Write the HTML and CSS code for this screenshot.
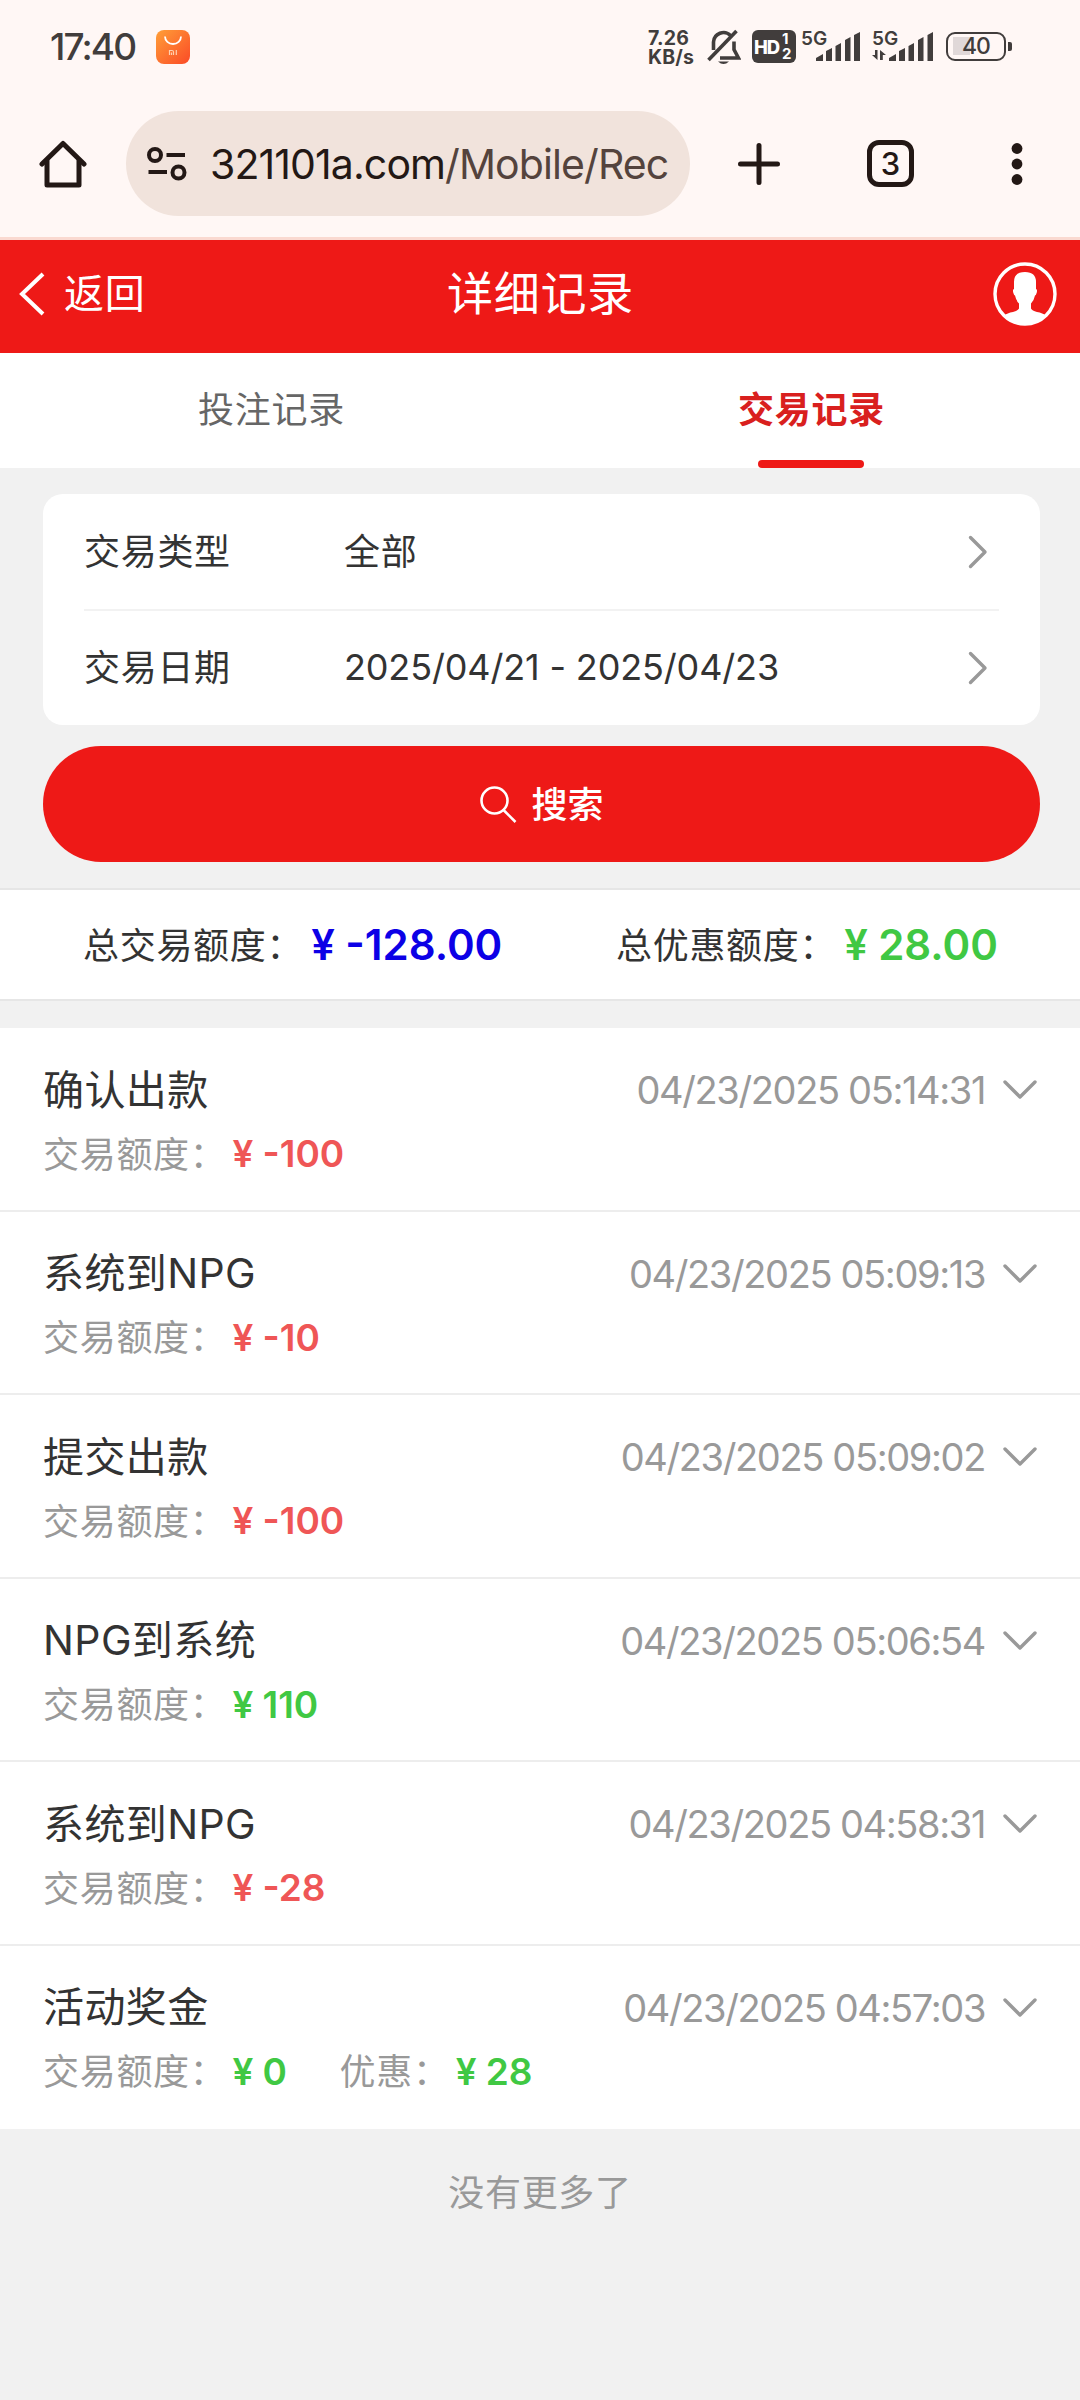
FILE: index.html
```html
<!DOCTYPE html>
<html lang="zh-CN">
<head>
<meta charset="utf-8">
<title>详细记录</title>
<link rel="stylesheet" href="styles.css">
</head>
<body>
<div class="status">
  <span class="clock">17:40</span>
  <svg class="store" width="34" height="34" viewBox="0 0 34 34"><defs><linearGradient id="g" x1="0" y1="0" x2="1" y2="1"><stop offset="0" stop-color="#ff9f38"/><stop offset="1" stop-color="#fb4a26"/></linearGradient></defs><rect width="34" height="34" rx="8" fill="url(#g)"/><path d="M9 6.500a8 7.500 0 0 0 16 0" fill="none" stroke="#fff" stroke-width="1.800"/><path d="M13.500 25v-4.500h2.500q1.500 0 1.500 1.500v3M15.500 22.500v2.500M20.300 20v5" fill="none" stroke="#ffd0b0" stroke-width="1.200"/></svg>
  <span class="speed"><span>7.26</span><span>KB/s</span></span>
  <svg class="bell" width="34" height="38" viewBox="0 0 34 38" fill="none" stroke="#413d3c" stroke-width="3.600"><path d="M6.500 22V14a10 10 0 0 1 17-6.500M27 13.500v8l4.500 8.500H13"/><path d="M1.500 32L29.500 3"/><path d="M11 33.500h11q-5.500 5-11 0z" fill="#413d3c" stroke="none"/></svg>
  <span class="hd"><b>HD</b><span class="sims"><i>1</i><i>2</i></span></span>
  <span class="signal one"><em>5G</em><svg width="60" height="34" viewBox="0 0 60 34" fill="#413d3c"><path d="M15 31v-3l7-4v7zM25 31v-10l6-3v13zM34.500 31v-15l5.500-3v18zM44 31v-21l5.500-3v24zM53 31v-26l6-3v29z"/></svg></span>
  <span class="signal two"><em>5G</em><svg width="62" height="34" viewBox="0 0 62 34" fill="#413d3c"><path d="M17 31v-3l7-4v7zM27 31v-10l6-3v13zM36.500 31v-15l5.500-3v18zM46 31v-21l5.500-3v24zM55.500 31v-26l5.500-3v29zM3 20h2.500v10l-5.500-5h3zM8 20l6 5h-3.200v5H8z"/></svg></span>
  <span class="battery"><b>40</b></span>
</div>
<div class="toolbar">
  <svg class="home" width="48" height="48" viewBox="0 0 48 48" fill="none" stroke="#231815" stroke-width="5" stroke-linecap="round" stroke-linejoin="round"><path d="M3 24L24 3.500 45 24"/><path d="M8 21v24h32V21"/></svg>
  <div class="pill">
    <svg width="40" height="34" viewBox="0 0 40 34" fill="none" stroke="#231815" stroke-width="4"><circle cx="8" cy="8" r="6"/><path d="M19.500 8H38M1.500 25H20"/><circle cx="31.500" cy="25.500" r="6"/></svg>
    <span class="url">321101a.com<span class="path">/Mobile/Rec</span></span>
  </div>
  <svg class="plus" width="42" height="42" viewBox="0 0 42 42" stroke="#231815" stroke-width="5" stroke-linecap="round"><path d="M2.500 21h37M21 2.500v37"/></svg>
  <span class="tabs">3</span>
  <svg class="dots" width="12" height="44" viewBox="0 0 12 44" fill="#231815"><circle cx="6" cy="6.500" r="5.400"/><circle cx="6" cy="22" r="5.400"/><circle cx="6" cy="37.500" r="5.400"/></svg>
</div>
<header class="head">
  <span class="back"><svg width="26" height="44" viewBox="0 0 26 44" fill="none" stroke="#fff" stroke-width="4"><path d="M24 2L3 22l21 20"/></svg><span>返回</span></span>
  <h1>详细记录</h1>
  <svg class="avatar" width="64" height="64" viewBox="0 0 64 64"><circle cx="32" cy="32" r="30" fill="none" stroke="#fff" stroke-width="3.400"/><path d="M21 20q0-10 11-10t11 10v7q1.500 0 .8 3.500-.8 3-1.800 3-1 5-4 8v5q1 2 6 3.500 6 1 8.500 3.500Q43 63 32 63T11.500 53.500Q14 51 20 50q5-1.500 6-3.500v-5q-3-3-4-8-1 0-1.800-3Q19.500 27 21 27z" fill="#fff"/></svg>
</header>
<nav class="nav"><span>投注记录</span><span class="on">交易记录</span></nav>
<main>
  <section class="card">
    <div class="row"><span class="k">交易类型</span><span class="v">全部</span><svg class="go" width="20" height="34" viewBox="0 0 20 34"><path d="M2.500 2.500L17 17 2.500 31.500"/></svg></div>
    <div class="row"><span class="k">交易日期</span><span class="v date">2025/04/21 - 2025/04/23</span><svg class="go" width="20" height="34" viewBox="0 0 20 34"><path d="M2.500 2.500L17 17 2.500 31.500"/></svg></div>
  </section>
  <button class="search"><svg width="37" height="37" viewBox="0 0 37 37" fill="none" stroke="#fff" stroke-width="2.600"><circle cx="14.500" cy="14.500" r="13"/><path d="M23.500 24L35.500 36"/></svg><span>搜索</span></button>
  <section class="sum">
    <div><span>总交易额度：</span><b class="blue"><i>¥</i><span>-128.00</span></b></div>
    <div><span>总优惠额度：</span><b class="green"><i>¥</i><span>28.00</span></b></div>
  </section>
  <ul class="list">
    <li><div class="top"><h2>确认出款</h2><time>04/23/2025 05:14:31</time><svg class="down" width="34" height="20" viewBox="0 0 34 20"><path d="M2 2l15 15L32 2"/></svg></div><div class="sub"><span>交易额度：</span><b class="red"><i>¥</i><span>-100</span></b></div></li>
    <li><div class="top"><h2>系统到NPG</h2><time>04/23/2025 05:09:13</time><svg class="down" width="34" height="20" viewBox="0 0 34 20"><path d="M2 2l15 15L32 2"/></svg></div><div class="sub"><span>交易额度：</span><b class="red"><i>¥</i><span>-10</span></b></div></li>
    <li><div class="top"><h2>提交出款</h2><time>04/23/2025 05:09:02</time><svg class="down" width="34" height="20" viewBox="0 0 34 20"><path d="M2 2l15 15L32 2"/></svg></div><div class="sub"><span>交易额度：</span><b class="red"><i>¥</i><span>-100</span></b></div></li>
    <li><div class="top"><h2>NPG到系统</h2><time>04/23/2025 05:06:54</time><svg class="down" width="34" height="20" viewBox="0 0 34 20"><path d="M2 2l15 15L32 2"/></svg></div><div class="sub"><span>交易额度：</span><b class="green"><i>¥</i><span>110</span></b></div></li>
    <li><div class="top"><h2>系统到NPG</h2><time>04/23/2025 04:58:31</time><svg class="down" width="34" height="20" viewBox="0 0 34 20"><path d="M2 2l15 15L32 2"/></svg></div><div class="sub"><span>交易额度：</span><b class="red"><i>¥</i><span>-28</span></b></div></li>
    <li><div class="top"><h2>活动奖金</h2><time>04/23/2025 04:57:03</time><svg class="down" width="34" height="20" viewBox="0 0 34 20"><path d="M2 2l15 15L32 2"/></svg></div><div class="sub"><span>交易额度：</span><b class="green first"><i>¥</i><span>0</span></b><span>优惠：</span><b class="green"><i>¥</i><span>28</span></b></div></li>
  </ul>
  <p class="end">没有更多了</p>
</main>
</body>
</html>
```
FILE: styles.css
```css
* { box-sizing: border-box; }
body { margin: 0; width: 1080px; height: 2400px; overflow: hidden; background: #f1f1f1; color: #333; font-family: Inter, "Noto Sans CJK SC", sans-serif; font-size: 36px; }
h1, h2, p, ul { margin: 0; padding: 0; font-weight: 400; }
i, em { font-style: normal; }
svg { display: block; flex: none; }

.status { display: flex; align-items: flex-start; height: 95px; padding: 0 68px 0 50px; background: #fff7f5; color: #413d3c; }
.clock { width: 106px; margin-top: 24px; font-size: 37px; line-height: 46px; font-weight: 500; letter-spacing: -1.900px; white-space: nowrap; }
.store { margin-top: 30px; }
.speed { display: flex; flex-direction: column; width: 59px; margin: 29px 0 0 458px; font-size: 19.500px; line-height: 19px; font-weight: 700; letter-spacing: .2px; white-space: nowrap; }
.bell { margin-top: 28px; }
.hd { display: flex; align-items: center; width: 44px; height: 33px; margin: 30px 0 0 11px; padding-left: 2px; border-radius: 6px; background: #413d3c; color: #fff; font-size: 18.500px; letter-spacing: -1px; }
.hd b { width: 28px; font-weight: 800; }
.sims { display: flex; flex-direction: column; font-size: 15px; line-height: 14.500px; font-weight: 700; }
.signal { position: relative; margin-top: 30px; }
.signal em { position: absolute; left: 0; top: -2px; font-size: 19px; line-height: 22px; font-weight: 600; }
.one { margin-left: 5px; }
.two { margin-left: 11px; }
.battery { position: relative; width: 60px; height: 29px; margin: 32px 0 0 12px; border: 2.500px solid #413d3c; border-radius: 9px; background: linear-gradient(#e0d8d8, #e0d8d8) 5px 3px / 17px 18px no-repeat; }
.battery b { display: block; text-align: center; font-size: 23px; line-height: 24px; font-weight: 500; letter-spacing: -1px; }
.battery::after { content: ""; position: absolute; right: -8px; top: 8px; width: 4px; height: 9px; border-radius: 0 2px 2px 0; background: #413d3c; }

.toolbar { display: flex; align-items: center; height: 145px; padding: 0 57px 5px 39px; border-bottom: 3px solid #fad9d0; background: #fff7f5; color: #231815; }
.pill { display: flex; align-items: center; width: 565px; height: 105px; margin-left: 39px; padding-left: 21px; border-radius: 53px; background: #f1e3dc; }
.url { margin-left: 23px; font-size: 41px; letter-spacing: -.9px; white-space: nowrap; }
.path { color: #54433d; }
.plus { margin-left: 48px; }
.tabs { width: 47px; height: 47px; margin-left: 87px; border: 5px solid #231815; border-radius: 12px; font-size: 31px; line-height: 37px; font-weight: 500; text-align: center; }
.dots { margin-left: 97px; }

.head { display: flex; align-items: center; justify-content: space-between; height: 113px; padding: 0 23px 6px 19px; background: #ee1917; color: #fff; }
.back { display: flex; align-items: center; gap: 19px; width: 182px; font-size: 40px; letter-spacing: .7px; }
.back span { padding-bottom: 5px; }
.head h1 { padding: 0 0 7px 3px; font-size: 46px; letter-spacing: .7px; }
.avatar { margin-left: 116px; }

.nav { display: flex; height: 115px; background: #fff; }
.nav span { display: flex; flex: 1; align-items: center; justify-content: center; padding: 0 0 8px 3px; color: #666; letter-spacing: .7px; }
.nav .on { position: relative; color: #d9201e; font-weight: 700; }
.on::after { content: ""; position: absolute; bottom: 0; left: 218px; width: 106px; height: 8px; border-radius: 4px; background: #ee1917; }

.card { margin: 26px 40px 0 43px; padding: 0 41px; border-radius: 20px; background: #fff; }
.row { display: flex; align-items: center; height: 115px; letter-spacing: .7px; }
.row + .row { height: 116px; border-top: 2px solid #f2f2f2; }
.k { width: 260px; padding-bottom: 6px; }
.v { flex: 1; padding-bottom: 6px; }
.date { padding-bottom: 2px; letter-spacing: -.15px; }
.go { margin-right: 11px; fill: none; stroke: #999; stroke-width: 3.400; stroke-linecap: round; stroke-linejoin: round; }
.search { display: flex; align-items: center; justify-content: center; gap: 14px; width: 997px; height: 116px; margin: 21px 0 0 43px; padding: 0 0 0 1px; border: 0; border-radius: 58px; background: #ee1917; color: #fff; font: 500 36px "Noto Sans CJK SC", sans-serif; }
.search span { padding-bottom: 5px; }

.sum { display: flex; align-items: center; justify-content: space-between; height: 113px; margin-top: 26px; padding: 0 82px 0 83px; border: solid #e6e6e6; border-width: 2px 0; background: #fff; letter-spacing: .7px; }
.sum div, .sub { display: flex; align-items: center; white-space: nowrap; }
.sum div > span { padding-bottom: 3px; }
b { display: flex; }
.sum b { margin-left: 8px; font-size: 42px; line-height: 50px; font-weight: 600; letter-spacing: 0; }
.sum i { width: 34px; }
.blue { color: #0c00e6; }
.green { color: #40c843; }
.red { color: #ef5656; }

.list { margin-top: 27px; list-style: none; }
.list li { height: 183.500px; padding: 32px 43px 0; border-bottom: 2px solid #ededed; background: #fff; }
.list li:last-child { border: 0; }
.top { display: flex; align-items: center; height: 60px; }
.top h2 { flex: 1; padding-bottom: 7px; font-size: 41px; letter-spacing: .4px; }
time { color: #999; font-size: 38px; letter-spacing: -1.370px; }
.down { margin-left: 18px; fill: none; stroke: #999; stroke-width: 3.400; stroke-linecap: round; stroke-linejoin: round; }
.sub { height: 66px; color: #999; letter-spacing: .7px; }
.sub > span { padding-bottom: 3px; }
.sub b { margin-left: 6px; padding-top: 1px; font-size: 37px; font-weight: 600; letter-spacing: 0; }
.sub i { width: 30px; }
.sub .first { width: 107px; }
.end { margin-top: 37px; text-align: center; color: #999; letter-spacing: .7px; line-height: 54px; }
```
